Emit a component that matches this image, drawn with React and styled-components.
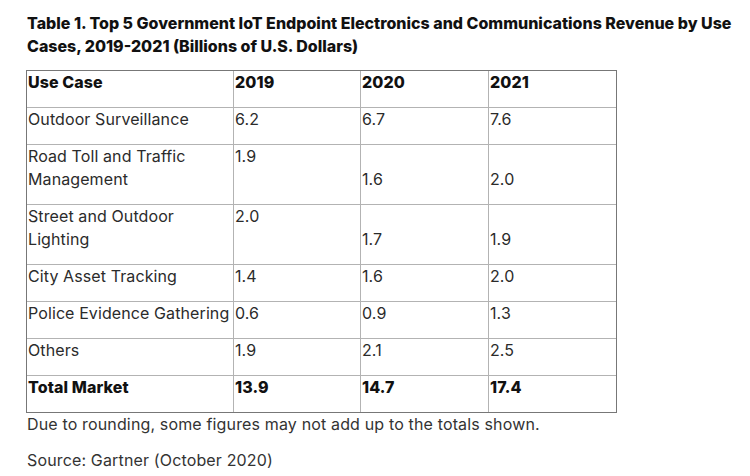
import React from "react";
import styled, { createGlobalStyle } from "styled-components";

const GlobalStyle = createGlobalStyle`
  body {
    margin: 0;
    background: #fff;
    font-family: Inter, "Open Sans", "Liberation Sans", sans-serif;
    color: #2b2b2b;
  }
`;

const Page = styled.div`
  padding: 12px 0 0 27px;
`;

const Title = styled.h2`
  margin: 0 0 12px;
  font-size: 16px;
  line-height: 23px;
  font-weight: 800;
  color: #111;
  white-space: nowrap;
`;

const Table = styled.table`
  margin-left: -1px;
  width: 590px;
  table-layout: fixed;
  border-collapse: separate;
  border-spacing: 0;
  border: 1px solid #777;
`;

const Cell = styled.td`
  padding: 0 2px 13px 1px;
  font-size: 16px;
  letter-spacing: 0.1px;
  line-height: 23px;
  font-weight: ${(p) => (p.$bold ? 800 : 400)};
  color: ${(p) => (p.$bold ? "#111" : "#2b2b2b")};
  vertical-align: ${(p) => (p.$low ? "bottom" : "top")};
  border-right: 1px solid #b3b3b3;
  border-bottom: 1px solid #b3b3b3;
  white-space: nowrap;

  &:first-child {
    white-space: normal;
  }
  &:last-child {
    border-right: none;
  }
  tr:last-child > & {
    border-bottom: none;
  }
`;

const Note = styled.p`
  margin: 0 0 13px;
  font-size: 16px;
  letter-spacing: 0.15px;
  line-height: 23px;
  color: #333;
`;

const rows = [
  { name: "Outdoor Surveillance", v: ["6.2", "6.7", "7.6"] },
  { name: "Road Toll and Traffic Management", v: ["1.9", "1.6", "2.0"], tall: true },
  { name: "Street and Outdoor Lighting", v: ["2.0", "1.7", "1.9"], tall: true },
  { name: "City Asset Tracking", v: ["1.4", "1.6", "2.0"] },
  { name: "Police Evidence Gathering", v: ["0.6", "0.9", "1.3"] },
  { name: "Others", v: ["1.9", "2.1", "2.5"] },
];

export default function App() {
  return (
    <Page>
      <GlobalStyle />
      <Title>
        Table 1. Top 5 Government IoT Endpoint Electronics and Communications Revenue by Use
        <br />
        Cases, 2019-2021 (Billions of U.S. Dollars)
      </Title>
      <Table>
        <colgroup>
          <col style={{ width: 207 }} />
          <col style={{ width: 127 }} />
          <col style={{ width: 128 }} />
          <col style={{ width: 127 }} />
        </colgroup>
        <tbody>
          <tr>
            <Cell $bold>Use Case</Cell>
            <Cell $bold>2019</Cell>
            <Cell $bold>2020</Cell>
            <Cell $bold>2021</Cell>
          </tr>
          {rows.map((r) => (
            <tr key={r.name}>
              <Cell>{r.name}</Cell>
              <Cell>{r.v[0]}</Cell>
              <Cell $low={r.tall}>{r.v[1]}</Cell>
              <Cell $low={r.tall}>{r.v[2]}</Cell>
            </tr>
          ))}
          <tr>
            <Cell $bold>Total Market</Cell>
            <Cell $bold>13.9</Cell>
            <Cell $bold>14.7</Cell>
            <Cell $bold>17.4</Cell>
          </tr>
        </tbody>
      </Table>
      <Note>Due to rounding, some figures may not add up to the totals shown.</Note>
      <Note>Source: Gartner (October 2020)</Note>
    </Page>
  );
}
